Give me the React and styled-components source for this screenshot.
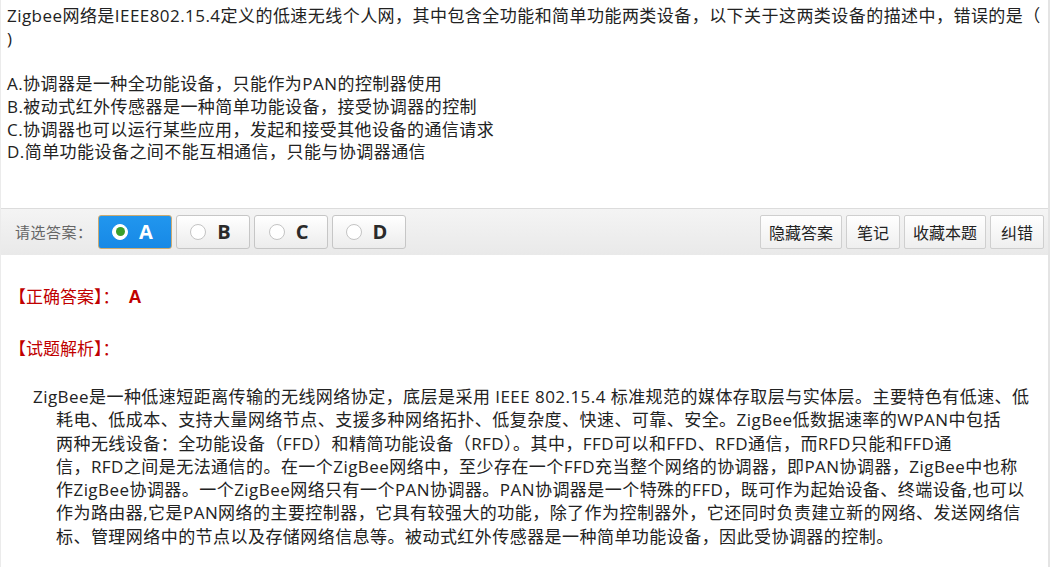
import React from "react";
import styled, { createGlobalStyle } from "styled-components";

const Global = createGlobalStyle`
  html, body { margin: 0; padding: 0; background: #fff; }
  body {
    font-family: "Open Sans", "Noto Sans CJK SC", sans-serif;
    color: #222;
  }
  * { box-sizing: border-box; }
`;

const Page = styled.div`
  width: 1050px;
  min-height: 567px;
  border-left: 1px solid #ebebeb;
  border-right: 2px solid #e4e4e4;
  display: flex;
  flex-direction: column;
`;

const Question = styled.div`
  padding: 5px 0 44px 6px;
  font-size: 17px;
  line-height: 22.7px;
  letter-spacing: 0.45px;
`;

const Stem = styled.div`
  margin-bottom: 22.7px;
`;

const Option = styled.div``;

const Toolbar = styled.div`
  display: flex;
  align-items: center;
  height: 47px;
  padding: 0 4px 0 14px;
  border-top: 1px solid #dcdcdc;
  background: linear-gradient(#f4f4f4, #e9e9e9);
`;

const Label = styled.span`
  font-size: 15px;
  color: #666;
  margin-right: 5px;
  letter-spacing: 0.5px;
`;

const Choices = styled.div`
  display: flex;
  gap: 4px;
`;

const Choice = styled.button`
  width: 74px;
  height: 34px;
  display: flex;
  align-items: center;
  justify-content: center;
  gap: 11px;
  padding: 0 4px 0 0;
  border-radius: 3px;
  border: 1px solid ${(p) => (p.$active ? "#c9aa72" : "#c6c6c6")};
  background: ${(p) =>
    p.$active ? "linear-gradient(#2196ee, #1789e6)" : "linear-gradient(#ffffff, #ececec)"};
  color: ${(p) => (p.$active ? "#fff" : "#2a2a2a")};
  font-family: "Open Sans", sans-serif;
  font-weight: 700;
  font-size: 20px;
  cursor: pointer;
`;

const Radio = styled.span`
  width: 16px;
  height: 16px;
  border-radius: 50%;
  background: #fff;
  border: 1px solid ${(p) => (p.$active ? "#fff" : "#c4c4c4")};
  display: flex;
  align-items: center;
  justify-content: center;
  &::after {
    content: "";
    width: 9px;
    height: 9px;
    border-radius: 50%;
    background: ${(p) => (p.$active ? "#3a9f2c" : "transparent")};
  }
`;

const Actions = styled.div`
  margin-left: auto;
  display: flex;
  gap: 4px;
`;

const ActionButton = styled.button`
  height: 34px;
  min-width: 54px;
  padding: 0 8px;
  border-radius: 2px;
  border: 1px solid #cfcfcf;
  background: linear-gradient(#ffffff, #efefef);
  font-family: "Noto Sans CJK SC", sans-serif;
  font-size: 16px;
  color: #222;
  cursor: pointer;
`;

const Answer = styled.div`
  padding: 29px 0 30px 8px;
`;

const RedLine = styled.div`
  color: #c00000;
  font-size: 17px;
  line-height: 23px;
  margin-bottom: ${(p) => p.$gap || 0}px;
  font-family: "Noto Sans CJK SC", sans-serif;
`;

const Letter = styled.span`
  font-family: "Liberation Sans", sans-serif;
  font-weight: 700;
  font-size: 18px;
  margin-left: 9px;
`;

const Analysis = styled.p`
  margin: 0;
  padding-left: 47px;
  text-indent: -23px;
  font-size: 17px;
  line-height: 23.3px;
  letter-spacing: 0.45px;
  color: #222;
`;

const options = [
  "A.协调器是一种全功能设备，只能作为PAN的控制器使用",
  "B.被动式红外传感器是一种简单功能设备，接受协调器的控制",
  "C.协调器也可以运行某些应用，发起和接受其他设备的通信请求",
  "D.简单功能设备之间不能互相通信，只能与协调器通信",
];

const analysisLines = [
  "ZigBee是一种低速短距离传输的无线网络协定，底层是采用 IEEE 802.15.4 标准规范的媒体存取层与实体层。主要特色有低速、低",
  "耗电、低成本、支持大量网络节点、支援多种网络拓扑、低复杂度、快速、可靠、安全。ZigBee低数据速率的WPAN中包括",
  "两种无线设备：全功能设备（FFD）和精简功能设备（RFD）。其中，FFD可以和FFD、RFD通信，而RFD只能和FFD通",
  "信，RFD之间是无法通信的。在一个ZigBee网络中，至少存在一个FFD充当整个网络的协调器，即PAN协调器，ZigBee中也称",
  "作ZigBee协调器。一个ZigBee网络只有一个PAN协调器。PAN协调器是一个特殊的FFD，既可作为起始设备、终端设备,也可以",
  "作为路由器,它是PAN网络的主要控制器，它具有较强大的功能，除了作为控制器外，它还同时负责建立新的网络、发送网络信",
  "标、管理网络中的节点以及存储网络信息等。被动式红外传感器是一种简单功能设备，因此受协调器的控制。",
];

export default function App() {
  return (
    <>
      <Global />
      <Page>
        <Question>
          <Stem>
            Zigbee网络是IEEE802.15.4定义的低速无线个人网，其中包含全功能和简单功能两类设备，以下关于这两类设备的描述中，错误的是（
            <br />)
          </Stem>
          {options.map((o) => (
            <Option key={o}>{o}</Option>
          ))}
        </Question>
        <Toolbar>
          <Label>请选答案：</Label>
          <Choices>
            {["A", "B", "C", "D"].map((l) => (
              <Choice key={l} $active={l === "A"}>
                <Radio $active={l === "A"} />
                {l}
              </Choice>
            ))}
          </Choices>
          <Actions>
            <ActionButton>隐藏答案</ActionButton>
            <ActionButton>笔记</ActionButton>
            <ActionButton>收藏本题</ActionButton>
            <ActionButton>纠错</ActionButton>
          </Actions>
        </Toolbar>
        <Answer>
          <RedLine $gap={27}>
            【正确答案】：<Letter>A</Letter>
          </RedLine>
          <RedLine $gap={26}>【试题解析】：</RedLine>
          <Analysis>
            {analysisLines.map((line, i) => (
              <React.Fragment key={i}>
                {line}
                {i < analysisLines.length - 1 && <br />}
              </React.Fragment>
            ))}
          </Analysis>
        </Answer>
      </Page>
    </>
  );
}
